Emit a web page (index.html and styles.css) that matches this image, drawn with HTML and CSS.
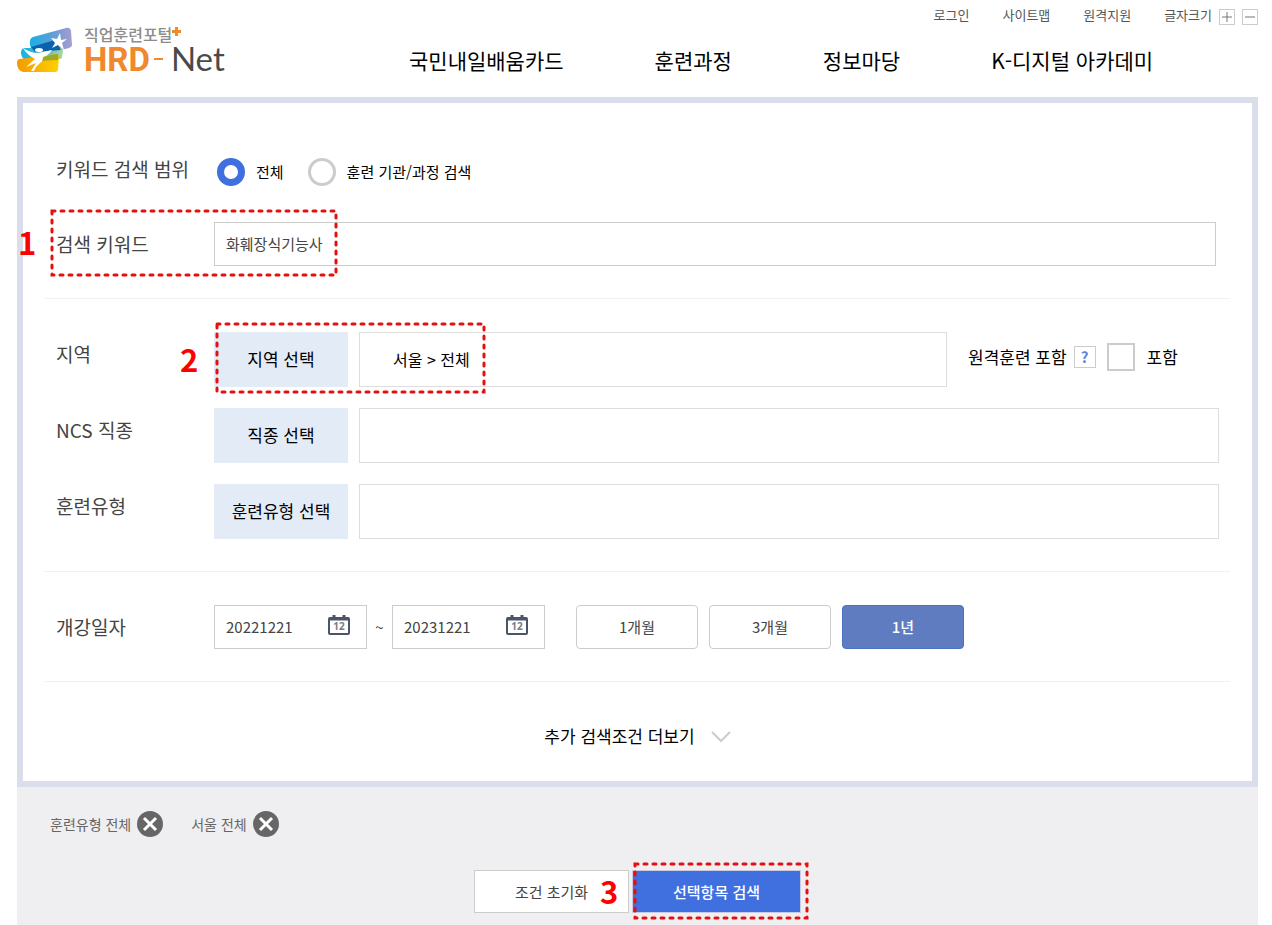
FILE: index.html
```html
<!DOCTYPE html>
<html lang="ko">
<head>
<meta charset="utf-8">
<title>직업훈련포털 HRD-Net</title>
<link rel="stylesheet" href="styles.css">
</head>
<body>
<div class="page">
  <header class="header">
    <a class="logo" href="#">
      <svg class="logo-mark" viewBox="0 0 55 46" aria-hidden="true">
        <defs>
          <linearGradient id="sky" x1="0" x2="1"><stop offset="0" stop-color="#17b0e6"/><stop offset=".5" stop-color="#5a9fd8"/><stop offset="1" stop-color="#a99bd0"/></linearGradient>
          <linearGradient id="sea" x1="0" x2="1"><stop offset="0" stop-color="#12b4e4"/><stop offset=".6" stop-color="#5bb9c4"/><stop offset="1" stop-color="#a9d8a4"/></linearGradient>
          <linearGradient id="sun" x1="0" x2="1"><stop offset="0" stop-color="#f39a00"/><stop offset="1" stop-color="#ffd000"/></linearGradient>
        </defs>
        <path d="M16 9 49 0Q53-1 54 3L55 17Q55 19 52 20L20 28Q15 24 13 17Q12 10 16 9Z" fill="url(#sky)"/>
        <path d="M8 20 43 20Q46 20 46 23L45 29Q45 31 42 31L10 33Q4 30 4 25Q4 20 8 20Z" fill="url(#sea)"/>
        <path d="M14 19 38 12 44 22 18 24Z" fill="#0b61ae"/>
        <path d="M3 31 39 26Q42 26 42 29L41 41Q41 44 38 44L6 44Q0 42 0 35Q0 31 3 31Z" fill="url(#sun)"/>
        <path d="M22 29 40 26Q42 26 41 32L20 33Z" fill="#9caa24"/>
        <path d="M43 5 44 12 50 11 45 15 47 22 41 17 35 20 38 15 34 10 40 11Z" fill="#fff"/>
        <ellipse cx="22" cy="22" rx="4" ry="2" fill="#fff"/>
        <path d="M6 20Q13 25 21 25L35 22Q31 28 26 29Q26 33 23 35Q19 38 17 43L14 43 19 35 9 39 18 31Q10 27 6 20Z" fill="#fff"/>
      </svg>
      <span class="logo-text">
        <span class="logo-sub">직업훈련포털<svg class="logo-plus" viewBox="0 0 9 9" aria-hidden="true"><path d="M4.500 0V9M0 4.500H9"/></svg></span>
        <span class="logo-name"><b>HRD</b><i class="logo-dash"></i><span>Net</span></span>
      </span>
    </a>
    <nav class="main-nav">
      <a href="#">국민내일배움카드</a>
      <a href="#">훈련과정</a>
      <a href="#">정보마당</a>
      <a href="#">K-디지털 아카데미</a>
    </nav>
    <div class="util">
      <a href="#">로그인</a>
      <a href="#">사이트맵</a>
      <a href="#">원격지원</a>
      <div class="font-size">
        <span>글자크기</span>
        <button type="button" aria-label="글자 크게"><svg viewBox="0 0 14 14"><path d="M7 2V12M2 7H12"/></svg></button>
        <button type="button" aria-label="글자 작게"><svg viewBox="0 0 14 14"><path d="M2 7H12"/></svg></button>
      </div>
    </div>
  </header>

  <form>
    <section class="panel">
      <div class="row row-scope">
        <span class="label">키워드 검색 범위</span>
        <div class="radios">
          <input type="radio" name="scope" id="scope-all" checked><label for="scope-all">전체</label>
          <input type="radio" name="scope" id="scope-org"><label for="scope-org">훈련 기관/과정 검색</label>
        </div>
      </div>
      <div class="row row-keyword">
        <label class="label" for="keyword">검색 키워드</label>
        <input class="field" id="keyword" type="text" value="화훼장식기능사">
        <svg class="mark mark-keyword" aria-hidden="true"><rect x="2" y="2"/></svg>
        <strong class="step step-1">1</strong>
      </div>

      <div class="group">
        <div class="row">
          <span class="label">지역</span>
          <button type="button" class="pick">지역 선택</button>
          <div class="picked">서울 &gt; 전체</div>
          <div class="remote">
            <span>원격훈련 포함</span>
            <button type="button" class="help">?</button>
            <input type="checkbox" id="remote"><label for="remote">포함</label>
          </div>
          <svg class="mark mark-region" aria-hidden="true"><rect x="2" y="2"/></svg>
          <strong class="step step-2">2</strong>
        </div>
        <div class="row">
          <span class="label">NCS 직종</span>
          <button type="button" class="pick">직종 선택</button>
          <div class="picked"></div>
        </div>
        <div class="row">
          <span class="label">훈련유형</span>
          <button type="button" class="pick">훈련유형 선택</button>
          <div class="picked"></div>
        </div>
      </div>

      <div class="group group-date">
        <div class="row">
          <label class="label" for="from">개강일자</label>
          <div class="date">
            <input type="text" id="from" value="20221221">
            <button type="button" aria-label="시작일 선택"><svg viewBox="0 0 22 20"><rect x="1" y="3" width="20" height="16" rx="1"/><path class="bar" d="M1 4H21"/><path class="pin" d="M6 0V4M16 0V4"/><text x="11" y="15">12</text></svg></button>
          </div>
          <span class="tilde">~</span>
          <div class="date">
            <input type="text" aria-label="종료일" value="20231221">
            <button type="button" aria-label="종료일 선택"><svg viewBox="0 0 22 20"><rect x="1" y="3" width="20" height="16" rx="1"/><path class="bar" d="M1 4H21"/><path class="pin" d="M6 0V4M16 0V4"/><text x="11" y="15">12</text></svg></button>
          </div>
          <div class="periods">
            <button type="button">1개월</button>
            <button type="button">3개월</button>
            <button type="button" class="on">1년</button>
          </div>
        </div>
      </div>

      <div class="group group-more">
        <button type="button" class="more">추가 검색조건 더보기
          <svg viewBox="0 0 20 12" aria-hidden="true"><path d="M1 1 10 10 19 1"/></svg>
        </button>
      </div>
    </section>

    <section class="summary">
      <ul class="chips">
        <li>훈련유형 전체 <button type="button" aria-label="훈련유형 전체 삭제"><svg viewBox="0 0 26 26"><circle cx="13" cy="13" r="13"/><path d="M7 7 19 19M19 7 7 19"/></svg></button></li>
        <li>서울 전체 <button type="button" aria-label="서울 전체 삭제"><svg viewBox="0 0 26 26"><circle cx="13" cy="13" r="13"/><path d="M7 7 19 19M19 7 7 19"/></svg></button></li>
      </ul>
      <div class="actions">
        <div class="action">
          <button type="reset" class="reset">조건 초기화</button>
          <strong class="step step-3">3</strong>
        </div>
        <div class="action">
          <button type="submit" class="search">선택항목 검색</button>
          <svg class="mark mark-search" aria-hidden="true"><rect x="2" y="2"/></svg>
        </div>
      </div>
    </section>
  </form>
</div>
</body>
</html>
```
FILE: styles.css
```css
* { box-sizing: border-box; }
body {
  margin: 0;
  background: #fff;
  color: #000;
  font: 15px/24px "Noto Sans CJK KR", "Noto Sans", sans-serif;
}
a { color: inherit; text-decoration: none; }
button, input { font: inherit; color: inherit; margin: 0; }
button { padding: 0; border: 0; background: none; cursor: pointer; }
svg { display: block; }

.page { padding: 0 14px 0 17px; }

/* header */
.header { position: relative; display: flex; height: 97px; padding-top: 24px; }
.logo { display: flex; gap: 12px; width: 392px; }
.logo-mark { width: 55px; height: 46px; margin-top: 4px; overflow: visible; }
.logo-sub { display: flex; color: #8c8c8c; font-size: 16px; font-weight: 500; line-height: 20px; }
.logo-plus { width: 9px; height: 9px; margin-top: 3px; stroke: #f08a24; stroke-width: 3; }
.logo-name { display: flex; align-items: baseline; line-height: 29px; color: #4a4a4a; font-family: Lato, sans-serif; font-size: 33px; }
.logo-name b { color: #f0882d; font-family: Roboto, sans-serif; }
.logo-dash { align-self: center; width: 9px; height: 2px; margin: 0 8px 0 4px; background: #f0882d; }
.main-nav { display: flex; gap: 91px; padding-top: 21px; font-size: 21px; line-height: 30px; white-space: nowrap; }
.util {
  position: absolute; top: 3px; right: 0;
  display: flex; gap: 33px;
  color: #555; font-size: 13px;
}
.font-size { display: flex; align-items: center; gap: 7px; }
.font-size button { width: 16px; height: 16px; margin-top: 4px; border: 1px solid #ccc; }
.font-size svg { width: 14px; height: 14px; fill: none; stroke: #777; }

/* search panel */
.panel { padding: 55px 22px 0; border: 6px solid #d9deea; }
.row { position: relative; display: flex; align-items: center; padding: 0 11px; }
.label { flex: 0 0 158px; color: #444; font-size: 19px; line-height: 28px; }
.row-scope { height: 28px; }
.row-scope .label { padding-bottom: 6px; }
.row-keyword { margin: 36px 3px 32px 0; }

.radios { display: flex; align-items: center; padding-left: 3px; }
.radios input { appearance: none; width: 28px; height: 28px; border: 3px solid #ccccd0; border-radius: 50%; background: #fff; }
.radios input:checked { border: 7px solid #4070df; }
.radios label { margin: 0 24px 0 11px; }

.field { flex: 1; min-width: 0; height: 44px; padding: 0 11px 2px; border: 1px solid #ccc; border-radius: 0; background: #fff; color: #444; }

.group { display: grid; gap: 21px; padding: 33px 0 32px; border-top: 1px solid #f1f1f1; }
.group .label { padding-bottom: 11px; }
.pick { flex: 0 0 134px; height: 55px; margin-right: 11px; padding-bottom: 2px; background: #e3ebf7; font-size: 17px; }
.picked { flex: 1; height: 55px; padding: 0 33px; border: 1px solid #ddd; font-size: 16px; line-height: 53px; }

.remote { display: flex; align-items: center; flex: 0 0 272px; padding: 0 0 5px 21px; font-size: 17px; }
.help { width: 22px; height: 22px; margin: 0 11px 0 7px; border: 1px solid #ccc; color: #6285d8; font-size: 15px; font-weight: 700; line-height: 20px; }
.remote input { appearance: none; width: 28px; height: 28px; margin-right: 12px; border: 2px solid #ccc; background: #fff; }

.group-date .label { padding-bottom: 0; }
.date { display: flex; align-items: center; flex: 0 0 153px; width: 153px; height: 44px; padding: 0 16px 4px 11px; border: 1px solid #ccc; color: #444; }
.date input { flex: 1; min-width: 0; padding: 4px 0 0; border: 0; background: none; }
.date svg { width: 22px; height: 20px; fill: none; stroke: #4b5468; stroke-width: 2; overflow: visible; }
.date .bar { stroke-width: 3; }
.date .pin { stroke-width: 3; }
.date text { fill: #777c8c; stroke: none; font: 700 10px "Noto Sans", sans-serif; text-anchor: middle; }
.tilde { flex: 0 0 25px; color: #444; text-align: center; }
.periods { display: flex; gap: 11px; padding-left: 31px; }
.periods button { width: 122px; height: 44px; border: 1px solid #ccc; border-radius: 4px; color: #444; }
.periods .on { border-color: #4b72c0; background: #5f7cc0; color: #fff; font-weight: 500; }

.group-more { justify-content: center; padding: 42px 0 33px; }
.more { display: flex; align-items: center; gap: 16px; font-size: 17px; }
.more svg { width: 20px; height: 12px; margin-top: 2px; fill: none; stroke: #ccc; stroke-width: 2; }

/* selected conditions */
.summary { padding: 24px 33px 12px; background: #efeff1; }
.chips { display: flex; gap: 28px; margin: 0 0 33px; padding: 0; list-style: none; color: #666; font-size: 14px; }
.chips li { display: flex; align-items: center; gap: 6px; }
.chips svg { width: 26px; height: 26px; fill: #666; }
.chips path { stroke: #fff; stroke-width: 3; }
.actions { display: flex; justify-content: center; gap: 3px; }
.action { position: relative; }
.reset { width: 155px; height: 43px; border: 1px solid #ccc; background: #fff; color: #444; }
.search { width: 169px; height: 43px; border: 1px solid #c9cce0; background: #4070df; color: #fff; font-weight: 500; }

/* step annotations laid over the form */
.mark { position: absolute; pointer-events: none; }
.mark rect {
  width: calc(100% - 4px); height: calc(100% - 4px);
  fill: none; stroke: #e60f0f; stroke-width: 3; stroke-linecap: round; stroke-dasharray: 3 6;
}
.mark-keyword { left: 5px; top: -13px; width: 288px; height: 68px; }
.mark-region { left: 170px; top: -10px; width: 271px; height: 72px; }
.mark-search { left: 1px; top: -8px; width: 176px; height: 58px; }
.step { position: absolute; color: #f00; font-size: 31px; line-height: 32px; }
.step-1 { left: -27px; top: 4px; }
.step-2 { left: 135px; top: 11px; }
.step-3 { left: 126px; top: 5px; }
```
